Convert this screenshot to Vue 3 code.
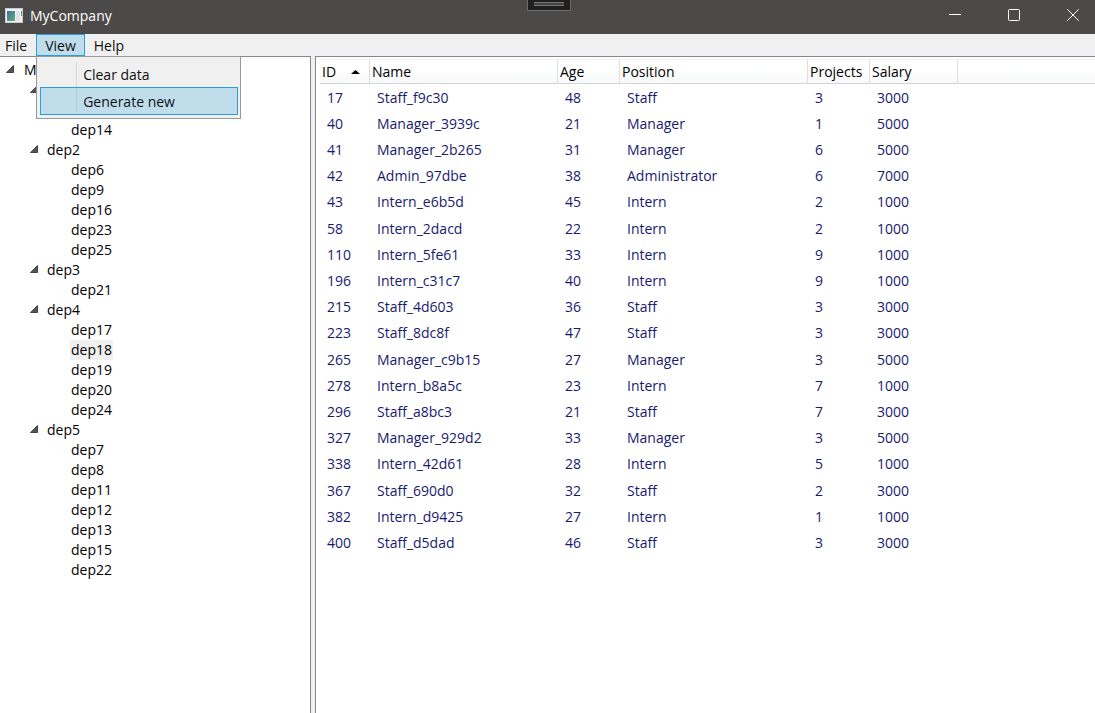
<script setup>
import { ref } from 'vue'

const menus = ['File', 'View', 'Help']
const openMenu = ref('View')
const commands = ['Clear data', 'Generate new']
const highlighted = ref('Generate new')
const selected = ref('dep18')

const departments = [
  { name: 'dep1', children: ['dep10', 'dep14'] },
  { name: 'dep2', children: ['dep6', 'dep9', 'dep16', 'dep23', 'dep25'] },
  { name: 'dep3', children: ['dep21'] },
  { name: 'dep4', children: ['dep17', 'dep18', 'dep19', 'dep20', 'dep24'] },
  { name: 'dep5', children: ['dep7', 'dep8', 'dep11', 'dep12', 'dep13', 'dep15', 'dep22'] }
]

const columns = ['ID', 'Name', 'Age', 'Position', 'Projects', 'Salary']
const employees = [
  [17, 'Staff_f9c30', 48, 'Staff', 3, 3000],
  [40, 'Manager_3939c', 21, 'Manager', 1, 5000],
  [41, 'Manager_2b265', 31, 'Manager', 6, 5000],
  [42, 'Admin_97dbe', 38, 'Administrator', 6, 7000],
  [43, 'Intern_e6b5d', 45, 'Intern', 2, 1000],
  [58, 'Intern_2dacd', 22, 'Intern', 2, 1000],
  [110, 'Intern_5fe61', 33, 'Intern', 9, 1000],
  [196, 'Intern_c31c7', 40, 'Intern', 9, 1000],
  [215, 'Staff_4d603', 36, 'Staff', 3, 3000],
  [223, 'Staff_8dc8f', 47, 'Staff', 3, 3000],
  [265, 'Manager_c9b15', 27, 'Manager', 3, 5000],
  [278, 'Intern_b8a5c', 23, 'Intern', 7, 1000],
  [296, 'Staff_a8bc3', 21, 'Staff', 7, 3000],
  [327, 'Manager_929d2', 33, 'Manager', 3, 5000],
  [338, 'Intern_42d61', 28, 'Intern', 5, 1000],
  [367, 'Staff_690d0', 32, 'Staff', 2, 3000],
  [382, 'Intern_d9425', 27, 'Intern', 1, 1000],
  [400, 'Staff_d5dad', 46, 'Staff', 3, 3000]
]
</script>

<template>
  <div class="window">
    <header class="titlebar">
      <svg class="app-icon" width="18" height="15" viewBox="0 0 18 15" aria-hidden="true">
        <defs>
          <linearGradient id="pane" x1="0" y1="0" x2="1" y2="1">
            <stop offset="0" stop-color="#3f6f9c" />
            <stop offset="1" stop-color="#5fae7c" />
          </linearGradient>
        </defs>
        <rect width="18" height="15" fill="#c9cbcd" />
        <rect x="1" y="1" width="16" height="13" fill="#f1f2f3" />
        <rect x="2" y="3" width="8" height="10" fill="url(#pane)" />
        <rect x="11" y="3" width="4" height="10" fill="#e2e5e8" />
        <rect x="16" y="3" width="1" height="5" fill="url(#pane)" />
      </svg>
      <span class="title">MyCompany</span>
      <button class="debug-grip" type="button" aria-label="Debug toolbar"><i></i></button>
      <div class="caption-buttons">
        <button type="button" aria-label="Minimize">
          <svg width="12" height="12" viewBox="0 0 12 12"><path d="M0 5.500h12" /></svg>
        </button>
        <button type="button" aria-label="Maximize">
          <svg width="12" height="12" viewBox="0 0 12 12"><rect x="0.5" y="0.5" width="11" height="11" rx="1" /></svg>
        </button>
        <button type="button" aria-label="Close">
          <svg width="12" height="12" viewBox="0 0 12 12"><path d="M0.300 0.300l11.400 11.400M11.700 0.300L0.300 11.700" /></svg>
        </button>
      </div>
    </header>

    <nav class="menubar">
      <div v-for="menu in menus" :key="menu" class="menu">
        <button type="button" class="menu-button" :class="{ open: openMenu === menu }"
          @click="openMenu = openMenu === menu ? '' : menu">{{ menu }}</button>
        <div v-if="menu === 'View' && openMenu === menu" class="popup">
          <button v-for="command in commands" :key="command" type="button" class="command"
            :class="{ highlighted: highlighted === command }" @mouseenter="highlighted = command">{{ command }}</button>
        </div>
      </div>
    </nav>

    <main class="content">
      <section class="tree-panel">
        <div class="node root">
          <button type="button" class="toggle" aria-label="Collapse MyCompany">
            <svg width="8" height="8" viewBox="0 0 8 8"><path d="M7.500 0.500v7h-7z" /></svg>
          </button>
          <button type="button" class="label">MyCompany</button>
        </div>
        <ul class="branches">
          <li v-for="dep in departments" :key="dep.name">
            <div class="node">
              <button type="button" class="toggle" :aria-label="'Collapse ' + dep.name">
                <svg width="8" height="8" viewBox="0 0 8 8"><path d="M7.500 0.500v7h-7z" /></svg>
              </button>
              <button type="button" class="label">{{ dep.name }}</button>
            </div>
            <ul class="leaves">
              <li v-for="child in dep.children" :key="child" class="node">
                <button type="button" class="label" :class="{ selected: selected === child }"
                  @click="selected = child">{{ child }}</button>
              </li>
            </ul>
          </li>
        </ul>
      </section>

      <section class="list-panel">
        <table>
          <colgroup>
            <col class="narrow"><col class="wide"><col class="medium"><col class="wide"><col class="medium"><col class="salary"><col>
          </colgroup>
          <thead>
            <tr>
              <th v-for="column in columns" :key="column" scope="col">
                <button type="button" class="sort">
                  {{ column }}
                  <svg v-if="column === 'ID'" width="9" height="4" viewBox="0 0 9 4"><path d="M4.500 0L9 4H0z" /></svg>
                </button>
              </th>
              <td></td>
            </tr>
          </thead>
          <tbody>
            <tr v-for="employee in employees" :key="employee[0]">
              <td v-for="(value, index) in employee" :key="index">{{ value }}</td>
              <td></td>
            </tr>
          </tbody>
        </table>
      </section>
    </main>
  </div>
</template>

<style>
body {
  margin: 0;
}
</style>

<style scoped>
.window {
  display: flex;
  flex-direction: column;
  height: 100vh;
  overflow: hidden;
  background: #f0f0f0;
  color: #111;
  font: 14px/20px "Segoe UI", "Open Sans", "Noto Sans", sans-serif;
}

button {
  margin: 0;
  padding: 0;
  border: 0;
  background: none;
  color: inherit;
  font: inherit;
  text-align: left;
}

svg {
  display: block;
}

.titlebar {
  position: relative;
  display: flex;
  align-items: center;
  flex: none;
  height: 34px;
  padding: 0 16px 4px 5px;
  box-sizing: border-box;
  background: #4c4a48;
  color: #fff;
}

.title {
  flex: 1;
  margin-left: 7px;
  padding-top: 2px;
}

.debug-grip {
  position: absolute;
  top: 0;
  left: calc(50% - 21px);
  width: 44px;
  height: 11px;
  box-sizing: border-box;
  border: 1px solid #6b6b6b;
  border-top: 0;
  background: #1f1f1f;
}

.debug-grip i {
  display: block;
  width: 30px;
  height: 2px;
  margin: 0 auto 3px;
  border: solid #777;
  border-width: 1px 0;
  background: #444;
}

.caption-buttons {
  display: flex;
  gap: 47px;
  height: 30px;
}

.caption-buttons svg {
  fill: none;
  stroke: #fff;
}

.menubar {
  display: flex;
  flex: none;
  height: 22px;
}

.menu {
  position: relative;
}

.menu-button {
  height: 22px;
  padding: 1px 8px 0;
  box-sizing: border-box;
  border: 1px solid transparent;
  line-height: 20px;
}

.menu:first-child .menu-button {
  padding-left: 4px;
}

.menu-button.open {
  border-color: #26a0da;
  background: #c0ddeb;
}

.popup {
  position: absolute;
  z-index: 1;
  top: 22px;
  left: 0;
  width: 205px;
  padding: 3px 2px 3px 3px;
  box-sizing: border-box;
  border: 1px solid #999;
  background: linear-gradient(#d7d7d7, #d7d7d7) 39px 5px / 1px 50px no-repeat #f0f0f0;
}

.command {
  display: block;
  width: 100%;
  height: 27px;
  padding: 2px 0 0 42px;
  box-sizing: border-box;
  border: 1px solid transparent;
}

.command.highlighted {
  height: 28px;
  border-color: #26a0da;
  background: linear-gradient(#aecbd9, #aecbd9) 35px 0 / 1px 24px no-repeat #c0ddeb;
}

.content {
  display: flex;
  flex: 1;
  min-height: 0;
  gap: 4px;
}

.tree-panel {
  flex: 0 0 311px;
  padding: 3px 0 0 6px;
  box-sizing: border-box;
  overflow: hidden;
  border: solid #828790;
  border-width: 1px 1px 0 0;
  background: #fff;
  color: #000;
}

ul {
  margin: 0;
  padding: 0;
  list-style: none;
}

.branches {
  padding-left: 24px;
}

.leaves {
  padding-left: 40px;
}

.node {
  display: flex;
  align-items: center;
  height: 20px;
}

.toggle {
  width: 16px;
  padding-bottom: 2px;
}

.root .toggle {
  width: 17px;
}

.toggle svg {
  fill: #555;
  stroke: #444;
}

.label {
  height: 20px;
  padding: 0 1px;
}

.label.selected {
  background: #f0f0f0;
}

.list-panel {
  flex: 1;
  min-width: 0;
  padding: 2px 0 0 4px;
  overflow: hidden;
  border: solid #828790;
  border-width: 1px 0 0 1px;
  background: #fff;
}

table {
  width: 100%;
  border-collapse: separate;
  border-spacing: 0;
  table-layout: fixed;
}

.narrow {
  width: 50px;
}

.medium {
  width: 62px;
}

.wide {
  width: 188px;
}

.salary {
  width: 88px;
}

thead th,
thead td {
  height: 25px;
  padding: 0;
  box-sizing: border-box;
  border-top: 1px solid #f0f0f2;
  border-bottom: 1px solid #d5d5d5;
  background: linear-gradient(#fff, #fff 40%, #f7f8fa);
  color: #000;
  font-weight: 400;
}

thead th {
  border-right: 1px solid #dfdfdf;
}

.sort {
  display: flex;
  align-items: center;
  justify-content: space-between;
  width: 100%;
  height: 23px;
  padding: 0 9px 0 2px;
}

th + th .sort {
  padding-right: 0;
}

tbody td {
  height: 26px;
  padding: 4px 0 0 7px;
  box-sizing: border-box;
  color: #191970;
  vertical-align: top;
  white-space: nowrap;
}

tbody tr:nth-child(5n) td {
  height: 27px;
}
</style>
